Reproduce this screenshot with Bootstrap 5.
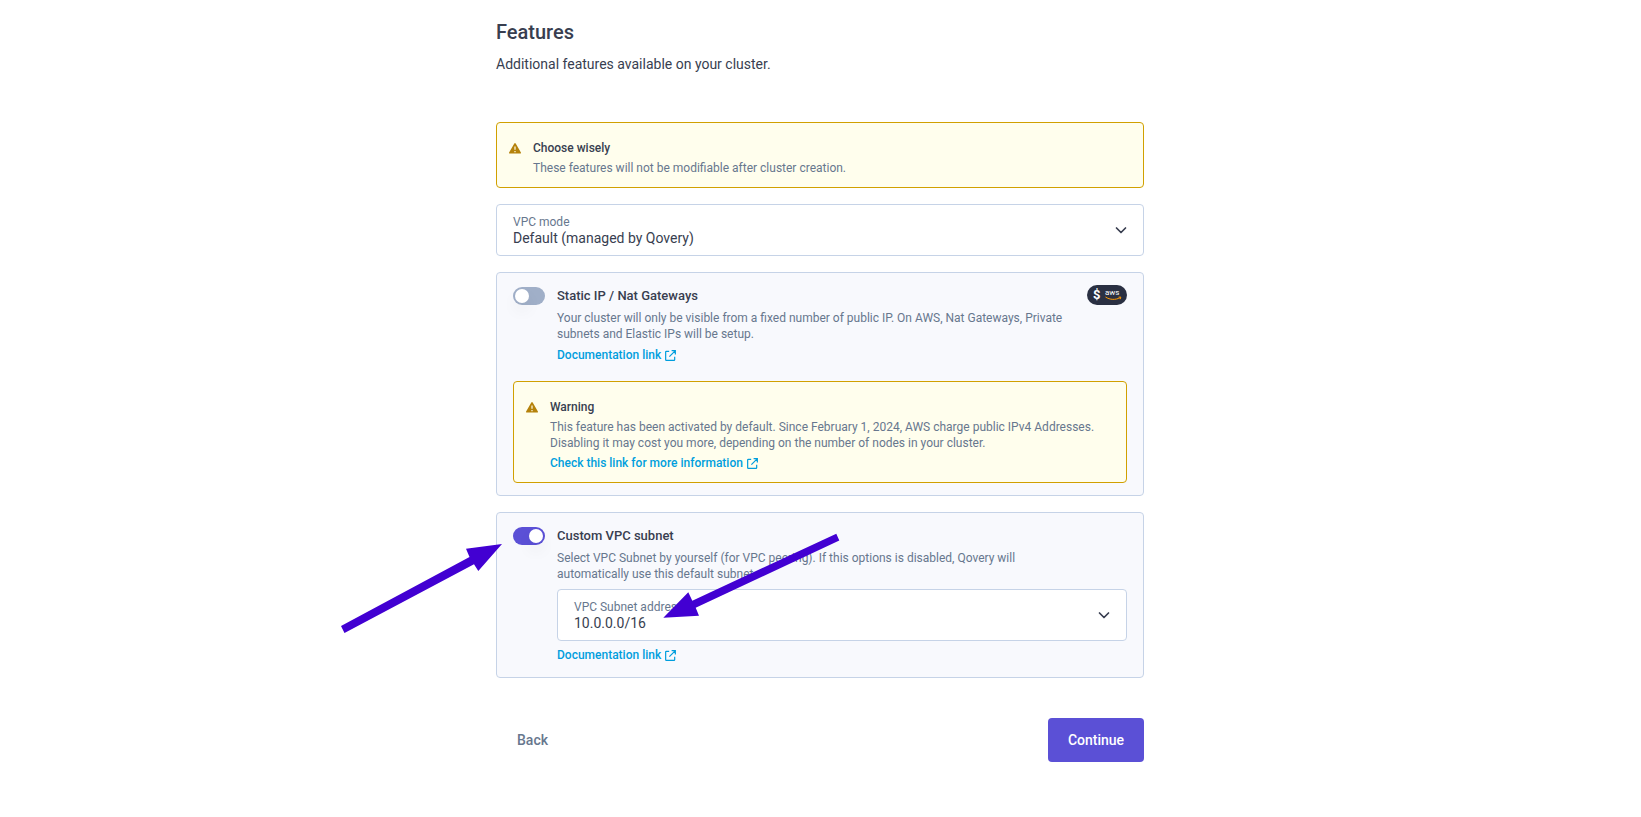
<!DOCTYPE html>
<html lang="en">
<head>
<meta charset="utf-8">
<meta name="viewport" content="width=device-width, initial-scale=1">
<title>Cluster features</title>
<link href="https://cdn.jsdelivr.net/npm/bootstrap@5.3.0/dist/css/bootstrap.min.css" rel="stylesheet">
<style>
  body { font-family: Roboto, "Liberation Sans", sans-serif; font-size: 12px; line-height: 16px; color: #67778e; background: #fff; padding-right: 1px; }
  .page { max-width: 648px; padding-top: 20px; padding-bottom: 40px; }
  h1 { font-size: 20px; line-height: 24px; font-weight: 500; color: #383e50; margin: 0 0 10px; }
  .intro { font-size: 14px; line-height: 20px; color: #383e50; margin: 0 0 48px; }
  .panel { border: 1px solid #c6d3e7; border-radius: 4px; background: #f8f9fd; padding: 12px 16px; }
  .split { gap: 12px; }
  .note { border: 1px solid #d1a000; border-radius: 4px; background: #fffeed; padding: 17px 12px 11px; }
  .panel .note { margin-top: 18px; }
  .note svg { width: 12px; height: 16px; flex: none; }
  .note h2 { font-size: 12px; line-height: 16px; font-weight: 500; color: #383e50; margin: 0 0 4px; }
  .doc-link { color: #009edd; font-weight: 500; text-decoration: none; display: flex; align-items: center; gap: 4px; margin-top: 4px; }
  .doc-link svg { width: 11px; height: 11px; }
  .feature-text + .doc-link { margin-top: 5px; }
  .field + .doc-link { margin-top: 6px; margin-bottom: 2px; }
  .field { border: 1px solid #c6d3e7; border-radius: 4px; background: #fff; padding: 9px 16px; }
  .feature-text + .field { margin-top: 7px; }
  .field select { appearance: none; border: 0; padding: 0; background: transparent; font-size: 14px; line-height: 16px; color: #383e50; width: 100%; display: block; }
  .field svg { width: 12px; height: 8px; flex: none; }
  .feature-title { font-size: 13px; line-height: 20px; font-weight: 500; color: #383e50; margin: 1px 0 4px; display: block; }
  .feature-text { padding-right: 56px; }
  .toggle { margin: 2px 0 0; }
  .toggle .form-check-input { width: 32px; height: 18px; margin: 0; border: 0; background: #a0afc8; border-radius: 9px; display: block; float: none; padding: 2px; }
  .toggle .form-check-input::before { content: ""; display: block; width: 14px; height: 14px; border-radius: 50%; background: #fff; box-shadow: 0 8px 16px rgba(0, 0, 0, .06); }
  .toggle .form-check-input:checked { background: #5b50d6; }
  .toggle .form-check-input:checked::before { margin-left: 14px; }
  .cost { top: 12px; right: 16px; width: 40px; height: 20px; border-radius: 10px; background: #2a3042; }
  .arrow { fill: #4200d2; pointer-events: none; z-index: 2; }
  .arrow-toggle { left: -157px; top: 30px; }
  .arrow-subnet { left: 166px; top: 20px; }
  .btn-step { font-size: 14px; line-height: 20px; font-weight: 500; height: 44px; border-radius: 4px; }
  .btn-back { color: #67778e; padding: 0 21px; }
  .btn-continue, .btn-continue:hover { background: #5b50d6; color: #fff; min-width: 96px; }
</style>
</head>
<body>
<svg class="d-none" xmlns="http://www.w3.org/2000/svg">
  <symbol id="warn" viewBox="0 0 12 16"><path d="M5.300 3.400a.8.8 0 0 1 1.400 0l5.200 9a.8.8 0 0 1-.7 1.200H.8a.8.8 0 0 1-.7-1.200z" fill="#b5820b"/><path d="M6 6.500v3.200M6 11v1.300" stroke="#fffeed" stroke-width="1.200"/></symbol>
  <symbol id="ext" viewBox="0 0 10 10"><path d="M3.800 1.200H1.200a.6.6 0 0 0-.6.6v7a.6.6 0 0 0 .6.6h7a.6.600 0 0 0 .6-.6V6.200M6 .6h3.400V4M9.200.8 4 6" fill="none" stroke="#009edd" stroke-width="1.100"/></symbol>
  <symbol id="chev" viewBox="0 0 12 8"><path d="M1.500 2 6 6.500l4.500-4.500" fill="none" stroke="#383e50" stroke-width="1.700" stroke-linecap="round" stroke-linejoin="round"/></symbol>
</svg>

<main class="page mx-auto">
  <h1>Features</h1>
  <p class="intro">Additional features available on your cluster.</p>

  <form class="d-flex flex-column gap-3">
    <div class="note split d-flex">
      <svg aria-hidden="true"><use href="#warn"/></svg>
      <div>
        <h2>Choose wisely</h2>
        <div>These features will not be modifiable after cluster creation.</div>
      </div>
    </div>

    <div class="field d-flex align-items-center">
      <div class="flex-grow-1">
        <label class="d-block" for="mode">VPC mode</label>
        <select id="mode"><option>Default (managed by Qovery)</option></select>
      </div>
      <svg aria-hidden="true"><use href="#chev"/></svg>
    </div>

    <section class="panel position-relative">
      <div class="split d-flex">
        <div class="toggle form-switch p-0"><input class="form-check-input" type="checkbox" role="switch" id="static-ip"></div>
        <div class="flex-grow-1">
          <label class="feature-title" for="static-ip">Static IP / Nat Gateways</label>
          <div class="feature-text">Your cluster will only be visible from a fixed number of public IP. On AWS, Nat Gateways, Private subnets and Elastic IPs will be setup.</div>
          <a class="doc-link" href="#">Documentation link <svg aria-hidden="true"><use href="#ext"/></svg></a>
        </div>
      </div>
      <div class="cost position-absolute">
        <svg class="d-block" width="40" height="20" viewBox="0 0 40 20" role="img" aria-label="Paid AWS feature">
          <text x="6" y="14" font-size="13" font-weight="700" fill="#fff">$</text>
          <text x="18" y="10" font-size="8" font-weight="400" fill="#fff">aws</text>
          <path d="M18.500 12c4.500 3 10 3 14.500.8M31.500 12.200l2.300-.2-.6 2.200" fill="none" stroke="#f90" stroke-width="1"/>
        </svg>
      </div>
      <div class="note split d-flex">
        <svg aria-hidden="true"><use href="#warn"/></svg>
        <div>
          <h2>Warning</h2>
          <div>This feature has been activated by default. Since February 1, 2024, AWS charge public IPv4 Addresses. Disabling it may cost you more, depending on the number of nodes in your cluster.</div>
          <a class="doc-link" href="#">Check this link for more information <svg aria-hidden="true"><use href="#ext"/></svg></a>
        </div>
      </div>
    </section>

    <section class="panel position-relative">
      <div class="split d-flex">
        <div class="toggle form-switch p-0"><input class="form-check-input" type="checkbox" role="switch" id="custom-subnet" checked></div>
        <div class="flex-grow-1">
          <label class="feature-title" for="custom-subnet">Custom VPC subnet</label>
          <div class="feature-text">Select VPC Subnet by yourself (for VPC peering). If this options is disabled, Qovery will automatically use this default subnet.</div>
          <div class="field d-flex align-items-center">
            <div class="flex-grow-1">
              <label class="d-block" for="subnet">VPC Subnet address</label>
              <select id="subnet"><option>10.0.0.0/16</option></select>
            </div>
            <svg aria-hidden="true"><use href="#chev"/></svg>
          </div>
          <a class="doc-link" href="#">Documentation link <svg aria-hidden="true"><use href="#ext"/></svg></a>
        </div>
      </div>
      <svg class="arrow arrow-toggle position-absolute" width="163" height="92" viewBox="340 543 163 92" aria-hidden="true"><path d="M341 626 469.500 557l-3.500-8.300 36-4.700-23.700 27-4.300-6.700L344.500 633z"/></svg>
      <svg class="arrow arrow-subnet position-absolute" width="178" height="86" viewBox="663 533 178 86" aria-hidden="true"><path d="M663.300 617.700 688.300 592.300 692.300 600.700 836.300 533.700 839.300 540.500 695.700 607.700 699 615.700z"/></svg>
    </section>

    <div class="d-flex justify-content-between mt-4">
      <button type="button" class="btn btn-step btn-back border-0">Back</button>
      <button type="submit" class="btn btn-step btn-continue border-0">Continue</button>
    </div>
  </form>
</main>
<script src="https://cdn.jsdelivr.net/npm/bootstrap@5.3.0/dist/js/bootstrap.bundle.min.js"></script>
</body>
</html>
